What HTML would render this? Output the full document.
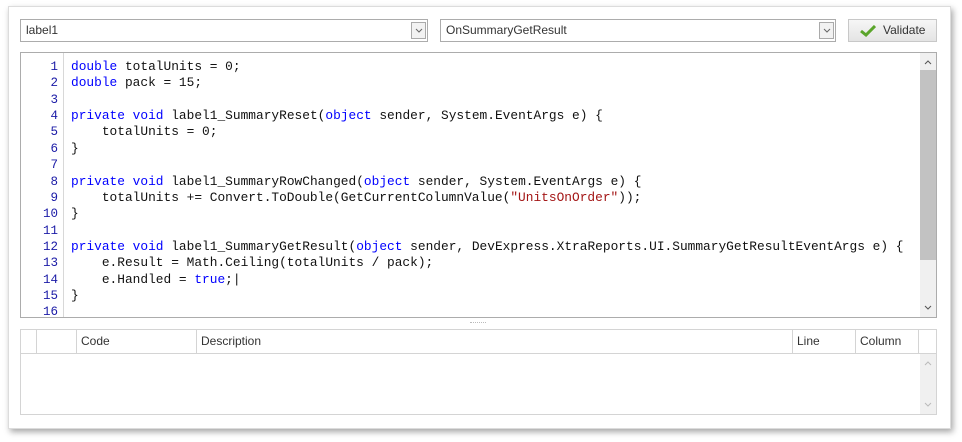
<!DOCTYPE html>
<html><head><style>
body{margin:0;width:962px;height:442px;background:#fff;position:relative;overflow:hidden;font-family:"Segoe UI","Liberation Sans",sans-serif;font-size:12px;color:#333}
.win{position:absolute;left:8px;top:6px;width:941px;height:421px;background:#fff;border:1px solid #dcdcdc;box-shadow:2px 3px 6px rgba(0,0,0,.35)}
.combo{position:absolute;top:19px;border:1px solid #acacac;background:#fff;font-size:12px;line-height:21px;padding-left:5px;box-sizing:border-box;height:23px}
.dd{position:absolute;right:1px;top:2px;width:15px;height:17px;border:1px solid #aaa;box-sizing:border-box;background:#f2f2f2}
.dd svg{position:absolute;left:3px;top:5px}
.btn{position:absolute;left:848px;top:19px;width:89px;height:23px;box-sizing:border-box;border:1px solid #c8c8c8;background:linear-gradient(#f6f6f6,#e4e4e4);font-size:12px;line-height:21px}
.ed{position:absolute;left:20px;top:52px;width:917px;height:266px;box-sizing:border-box;border:1px solid #acacac;overflow:hidden}
.gut{position:absolute;left:0;top:0;width:42px;height:100%;border-right:1px solid #d8d8d8}
.code{position:absolute;top:6px;font-family:"Liberation Mono",monospace;font-size:12.85px;line-height:16.36px;white-space:pre;color:#111}
.ln{left:0;width:37px;text-align:right;color:#1a1aa6;font-size:12.5px}
.src{left:50px}
.k{color:#0000ff}.s{color:#a31515}
.sb{position:absolute;right:0;top:0;width:16px;height:100%;background:#f0f0f0}
.grid{position:absolute;left:20px;top:329px;width:917px;height:86px;box-sizing:border-box;border:1px solid #d4d4d4}
.hd{position:absolute;top:0;left:0;right:0;height:23px;border-bottom:1px solid #d4d4d4}
.c{position:absolute;top:0;height:23px;border-left:1px solid #d4d4d4;line-height:23px;padding-left:4px;font-size:12px}
</style></head><body>
<div class="win"></div>
<div class="combo" style="left:20px;width:408px">label1<div class="dd"><svg width="8" height="6"><path d="M1 1L4 4L7 1" stroke="#666" fill="none"/></svg></div></div>
<div class="combo" style="left:440px;width:396px">OnSummaryGetResult<div class="dd"><svg width="8" height="6"><path d="M1 1L4 4L7 1" stroke="#666" fill="none"/></svg></div></div>
<div class="btn"><svg style="position:absolute;left:11px;top:5px" width="16" height="12"><path d="M1 6L6 10L15 1" stroke="#5aa52a" stroke-width="3" fill="none"/></svg><span style="position:absolute;left:34px">Validate</span></div>
<div class="ed">
<div class="gut"></div>
<div class="code ln">1
2
3
4
5
6
7
8
9
10
11
12
13
14
15
16</div>
<div class="code src"><span class="k">double</span> totalUnits = 0;
<span class="k">double</span> pack = 15;

<span class="k">private</span> <span class="k">void</span> label1_SummaryReset(<span class="k">object</span> sender, System.EventArgs e) {
    totalUnits = 0;
}

<span class="k">private</span> <span class="k">void</span> label1_SummaryRowChanged(<span class="k">object</span> sender, System.EventArgs e) {
    totalUnits += Convert.ToDouble(GetCurrentColumnValue(<span class="s">"UnitsOnOrder"</span>));
}

<span class="k">private</span> <span class="k">void</span> label1_SummaryGetResult(<span class="k">object</span> sender, DevExpress.XtraReports.UI.SummaryGetResultEventArgs e) {
    e.Result = Math.Ceiling(totalUnits / pack);
    e.Handled = <span class="k">true</span>;|
}
</div>
<div class="sb"><svg style="position:absolute;left:4px;top:6px" width="8" height="6"><path d="M1 5L4 2L7 5" stroke="#555" fill="none"/></svg><div style="position:absolute;left:0;top:17px;width:16px;height:190px;background:#c2c2c2"></div><svg style="position:absolute;left:4px;bottom:6px" width="8" height="6"><path d="M1 1L4 4L7 1" stroke="#555" fill="none"/></svg></div>
</div>
<div style="position:absolute;left:470px;top:322px;width:16px;border-top:1px dotted #bbb"></div>
<div class="grid">
<div class="hd">
<div class="c" style="left:15px;width:40px"></div>
<div class="c" style="left:55px">Code</div>
<div class="c" style="left:175px">Description</div>
<div class="c" style="left:771px">Line</div>
<div class="c" style="left:834px">Column</div>
<div class="c" style="left:897px;width:16px"></div>
</div>
<div style="position:absolute;right:0;top:24px;width:16px;bottom:0;background:#f0f0f0"><svg style="position:absolute;left:4px;top:6px" width="8" height="6"><path d="M1 5L4 2L7 5" stroke="#bbb" fill="none"/></svg><svg style="position:absolute;left:4px;bottom:6px" width="8" height="6"><path d="M1 1L4 4L7 1" stroke="#bbb" fill="none"/></svg></div>
</div>
</body></html>
